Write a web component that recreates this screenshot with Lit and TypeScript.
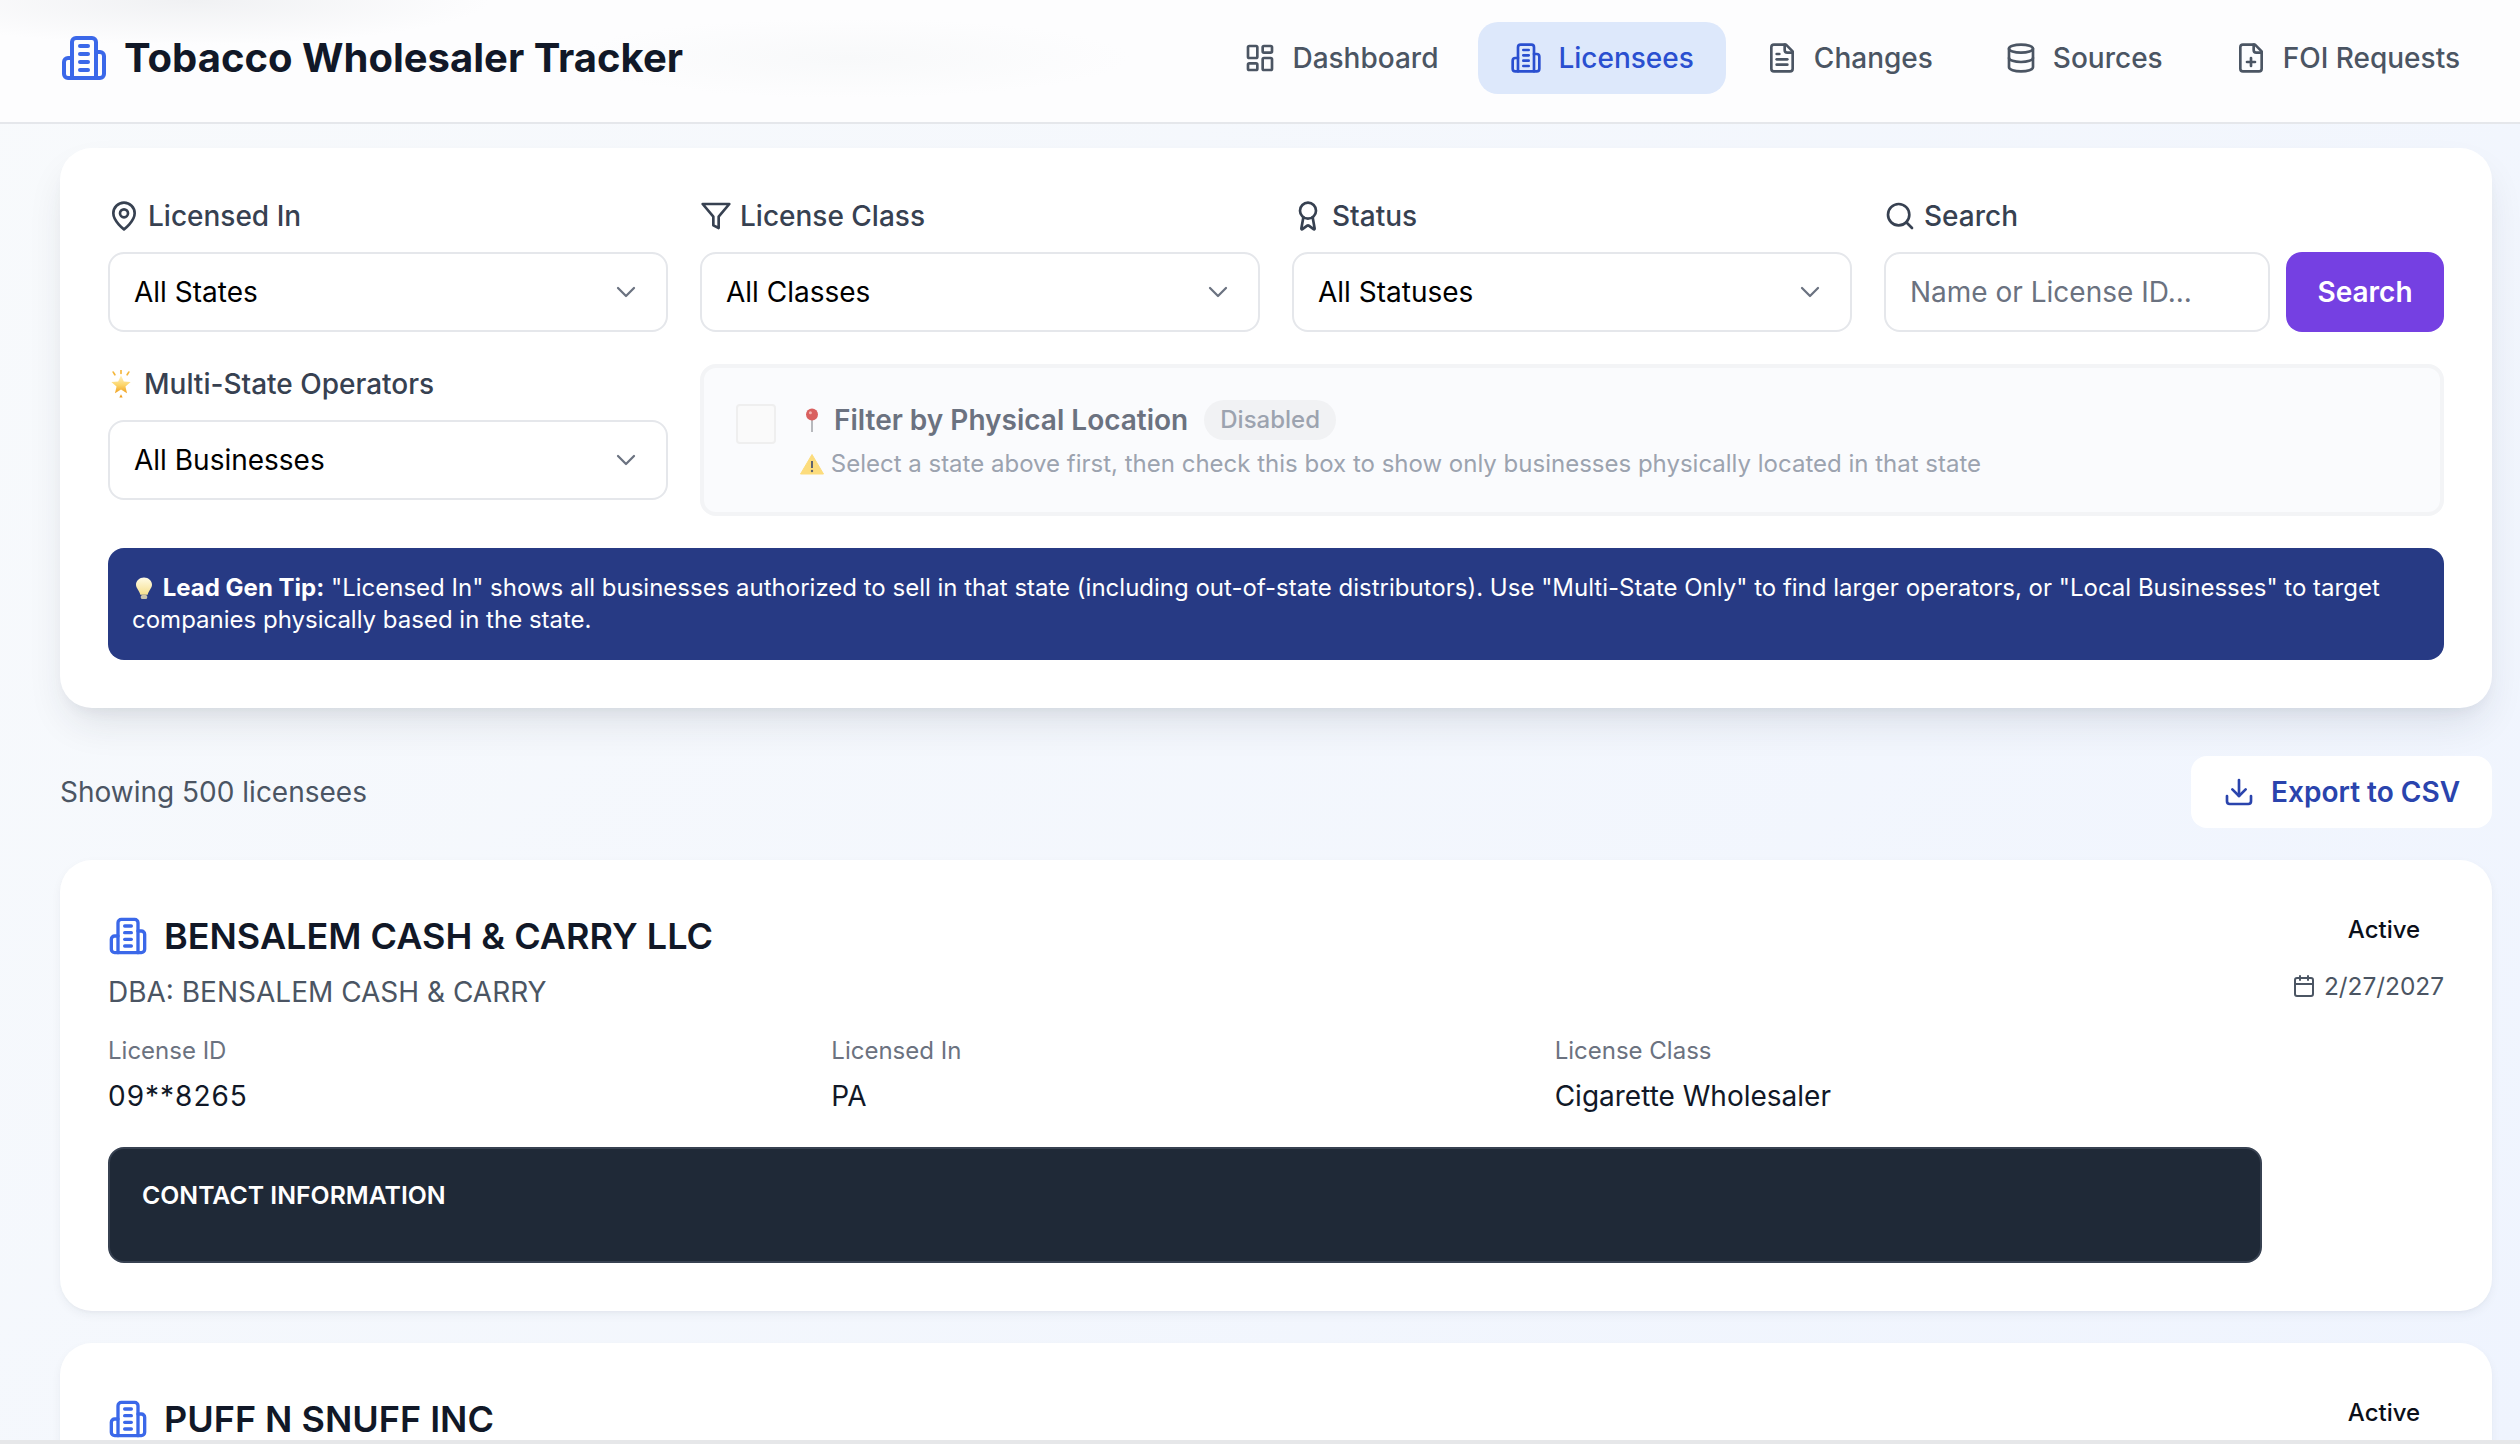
import { LitElement, html, css, svg } from "lit";
import { customElement } from "lit/decorators.js";

const I = (c: any, cls = "") => html`<svg class="ic ${cls}" viewBox="0 0 24 24" fill="none" stroke="currentColor" stroke-width="2" stroke-linecap="round" stroke-linejoin="round">${c}</svg>`;
const building = svg`<path d="M6 22V4a2 2 0 0 1 2-2h8a2 2 0 0 1 2 2v18Z"/><path d="M6 12H4a2 2 0 0 0-2 2v6a2 2 0 0 0 2 2h2"/><path d="M18 9h2a2 2 0 0 1 2 2v9a2 2 0 0 1-2 2h-2"/><path d="M10 6h4"/><path d="M10 10h4"/><path d="M10 14h4"/><path d="M10 18h4"/>`;
const dash = svg`<rect width="7" height="9" x="3" y="3" rx="1"/><rect width="7" height="5" x="14" y="3" rx="1"/><rect width="7" height="9" x="14" y="12" rx="1"/><rect width="7" height="5" x="3" y="16" rx="1"/>`;
const fileText = svg`<path d="M15 2H6a2 2 0 0 0-2 2v16a2 2 0 0 0 2 2h12a2 2 0 0 0 2-2V7Z"/><path d="M14 2v4a2 2 0 0 0 2 2h4"/><path d="M10 9H8"/><path d="M16 13H8"/><path d="M16 17H8"/>`;
const database = svg`<ellipse cx="12" cy="5" rx="9" ry="3"/><path d="M3 5V19A9 3 0 0 0 21 19V5"/><path d="M3 12A9 3 0 0 0 21 12"/>`;
const filePlus = svg`<path d="M15 2H6a2 2 0 0 0-2 2v16a2 2 0 0 0 2 2h12a2 2 0 0 0 2-2V7Z"/><path d="M14 2v4a2 2 0 0 0 2 2h4"/><path d="M9 15h6"/><path d="M12 18v-6"/>`;
const pin = svg`<path d="M20 10c0 6-8 12-8 12s-8-6-8-12a8 8 0 0 1 16 0Z"/><circle cx="12" cy="10" r="3"/>`;
const filter = svg`<polygon points="22 3 2 3 10 12.46 10 19 14 21 14 12.46 22 3"/>`;
const award = svg`<path d="m15.477 12.89 1.515 8.526a.5.5 0 0 1-.81.47l-3.58-2.687a1 1 0 0 0-1.197 0l-3.586 2.686a.5.5 0 0 1-.81-.469l1.514-8.526"/><circle cx="12" cy="8" r="6"/>`;
const search = svg`<circle cx="11" cy="11" r="8"/><path d="m21 21-4.3-4.3"/>`;
const download = svg`<path d="M21 15v4a2 2 0 0 1-2 2H5a2 2 0 0 1-2-2v-4"/><path d="M7 10l5 5 5-5"/><path d="M12 15V3"/>`;
const calendar = svg`<path d="M8 2v4"/><path d="M16 2v4"/><rect width="18" height="18" x="3" y="4" rx="2"/><path d="M3 10h18"/>`;
const chevron = svg`<path d="m6 9 6 6 6-6"/>`;

const starIcon = html`<svg class="em star" viewBox="3 0.5 22 27"><defs><linearGradient id="sg" x1="0" y1="0" x2="0" y2="1"><stop offset="0" stop-color="#fff3c4"/><stop offset=".55" stop-color="#fcd56a"/><stop offset="1" stop-color="#f0a020"/></linearGradient></defs><path d="M14 5.500l2.700 6 6.600.6-5 4.300 1.500 6.400-5.800-3.400-5.800 3.400 1.500-6.400-5-4.300 6.600-.6z" fill="url(#sg)"/><path d="M14 .8v3M6.500 2.500l1.600 2.600M21.500 2.500l-1.600 2.600" stroke="#f4b63a" stroke-width="1.600" stroke-linecap="round"/><path d="M14 24l1.600 3h-3.200z" fill="#f0a020"/></svg>`;
const pinIcon = html`<svg class="em pin" viewBox="0 0 24 24"><rect x="11.200" y="9" width="1.600" height="15" fill="#a7a9ad"/><circle cx="12" cy="6.500" r="6" fill="#d9605f"/><circle cx="10.400" cy="4.800" r="1.500" fill="#f2b3b0"/></svg>`;
const warnIcon = html`<svg class="em warn" viewBox="0 0 24 24"><path d="M12 2.500L23.500 22H.5z" fill="#fcdc7c" stroke="#fcdc7c" stroke-linejoin="round"/><path d="M12 9v7" stroke="#5f6470" stroke-width="2"/><circle cx="12" cy="19" r="1.200" fill="#5f6470"/></svg>`;
const bulbIcon = html`<svg class="em bulb" viewBox="0 0 24 24"><defs><linearGradient id="bg" x1="0" y1="0" x2="0" y2="1"><stop offset="0" stop-color="#fffbe6"/><stop offset="1" stop-color="#f6e08e"/></linearGradient></defs><path d="M12 1.500c4.600 0 8 3.300 8 7.200 0 3.400-3.500 5.800-4.300 10H8.300C7.500 14.500 4 12.100 4 8.700c0-3.900 3.400-7.200 8-7.200z" fill="url(#bg)"/><rect x="8.800" y="19" width="6.400" height="4" rx="1.500" fill="#c9c3ac"/></svg>`;

const nav = [
  { t: "Dashboard", i: dash },
  { t: "Licensees", i: building, on: true },
  { t: "Changes", i: fileText },
  { t: "Sources", i: database },
  { t: "FOI Requests", i: filePlus },
];

@customElement("app-root")
export class AppRoot extends LitElement {
  static styles = css`
    :host { display: flex; flex-direction: column; height: 1444px; overflow: hidden; font-family: Inter, "Liberation Sans", sans-serif; color: #111827; background: linear-gradient(135deg, #f8fafc 0%, #eff4fe 100%); }
    * { box-sizing: border-box; }
    .ic { display: block; flex: none; }
    .em { flex: none; display: inline-block; }
    header { flex: none; height: 124px; border-bottom: 2px solid #e5e7eb; display: flex; align-items: center; justify-content: space-between; padding: 0 28px 6px 60px;
      background: radial-gradient(ellipse 300px 45px at 190px 0, #f0f1f3 0%, rgba(241,242,244,0) 100%), radial-gradient(ellipse 280px 40px at 850px 58px, #f8f9fa 0%, rgba(249,250,251,0) 100%), #fdfdfe; }
    .brand { display: flex; align-items: center; gap: 16px; }
    .brand .ic { width: 48px; height: 48px; color: #3b68e9; }
    .brand h1 { margin: 0; font-size: 40px; line-height: 56px; font-weight: 700; color: #111827; }
    nav { display: flex; align-items: center; gap: 8px; }
    .nav { display: flex; align-items: center; gap: 16px; height: 72px; padding: 0 32px; border-radius: 20px; font-size: 28px; font-weight: 500; color: #4b5563; }
    .nav .ic { width: 32px; height: 32px; }
    .nav.on { background: #dde8fb; color: #2a4fd0; }
    main { flex: 1; min-height: 0; overflow: hidden; padding: 24px 28px 0 60px; display: flex; flex-direction: column; }
    .panel { flex: none; background: #fff; border-radius: 32px; padding: 48px; box-shadow: 0 20px 40px -8px rgba(30,41,59,.12), 0 8px 16px -8px rgba(30,41,59,.08); display: flex; flex-direction: column; gap: 32px; }
    .grid { display: grid; grid-template-columns: repeat(4, 1fr); gap: 32px; }
    .field { display: flex; flex-direction: column; gap: 16px; }
    .label { display: flex; align-items: center; gap: 8px; height: 40px; font-size: 28px; font-weight: 500; color: #374151; }
    .label .ic { width: 32px; height: 32px; }
    .label .star { width: 26px; height: 28px; margin-right: 2px; }
    select, input { height: 80px; width: 100%; min-width: 0; border: 2px solid #e5e7eb; border-radius: 16px; background-color: #fff; font: 400 28px Inter, "Liberation Sans", sans-serif; color: #000; padding: 0 24px; outline: none; }
    .sel { position: relative; }
    select { appearance: none; display: block; }
    .sel .ic { position: absolute; right: 26px; top: 24px; width: 32px; height: 32px; color: #6b7280; pointer-events: none; stroke-width: 1.7; }
    input::placeholder { color: #6b7280; opacity: 1; }
    .search { display: flex; gap: 16px; }
    .search input { flex: 1; }
    button { font-family: inherit; border: 0; cursor: pointer; }
    .go { flex: none; width: 158px; height: 80px; border-radius: 16px; background: #7540e2; color: #fff; font-size: 28px; font-weight: 600; }
    .phys { grid-column: 2 / 5; height: 152px; border: 4px solid #f3f4f6; border-radius: 16px; background: #fafbfd; display: flex; align-items: flex-start; padding: 36px 32px; gap: 24px; }
    .box { flex: none; width: 40px; height: 40px; border: 2px solid #efefef; border-radius: 4px; background: #fafafa; }
    .phys-body { display: flex; flex-direction: column; gap: 4px; margin-top: -6px; }
    .ptitle { display: flex; align-items: center; gap: 16px; font-size: 28px; font-weight: 600; color: #6b7280; line-height: 44px; }
    .ptitle .pin { width: 24px; height: 26px; margin-right: -6px; }
    .pill { font-size: 24px; font-weight: 500; color: #9ca3af; background: #f1f2f4; border-radius: 20px; padding: 0 16px; height: 40px; line-height: 40px; }
    .psub { font-size: 24px; color: #9ca3af; line-height: 36px; }
    .psub .warn { width: 24px; height: 24px; vertical-align: -4px; }
    .tip { background: #273a84; color: #fff; border-radius: 16px; padding: 24px; font-size: 24px; line-height: 32px; }
    .tip b { font-weight: 700; }
    .tip .bulb { width: 24px; height: 24px; vertical-align: -4px; }
    .bar { flex: none; display: flex; justify-content: space-between; align-items: center; margin-top: 48px; height: 72px; }
    .count { font-size: 28px; color: #4b5563; }
    .export { display: flex; align-items: center; gap: 16px; height: 72px; padding: 0 32px; border-radius: 16px; background: #fff; color: #2a44ad; font-size: 28px; font-weight: 600; }
    .export .ic { width: 32px; height: 32px; }
    .list { display: flex; flex-direction: column; gap: 32px; margin-top: 32px; }
    .card { flex: none; background: #fff; border-radius: 32px; padding: 48px; display: flex; gap: 32px; box-shadow: 0 4px 12px -2px rgba(30,41,59,.07), 0 2px 4px -2px rgba(30,41,59,.05); }
    .left { flex: 1; min-width: 0; }
    .name { display: flex; align-items: center; gap: 16px; margin: 0; font-size: 36px; line-height: 56px; font-weight: 600; color: #111827; }
    .name .ic { width: 40px; height: 40px; color: #3b68e9; }
    .dba { font-size: 28px; line-height: 40px; color: #4b5563; margin-top: 8px; }
    .cols { display: grid; grid-template-columns: repeat(3, 1fr); gap: 16px; margin-top: 21px; }
    .k { font-size: 24px; line-height: 36px; color: #6b7280; font-weight: 400; }
    .v { font-size: 28px; line-height: 44px; color: #111827; margin-top: 5px; }
    .v.id { letter-spacing: 1px; }
    .contact { margin-top: 29px; height: 116px; background: #1f2937; border: 2px solid #374151; border-radius: 16px; padding: 30px 32px; color: #fff; font-size: 24.8px; line-height: 32px; font-weight: 600; }
    .right { flex: none; width: 150px; display: flex; flex-direction: column; align-items: flex-end; padding-top: 4px; }
    .status { width: 120px; text-align: center; font-size: 24px; font-weight: 500; color: #0b0f19; line-height: 36px; }
    .date { display: flex; align-items: center; gap: 8px; font-size: 24.4px; color: #4b5563; white-space: nowrap; margin-top: 20px; line-height: 36px; }
    .date .ic { width: 24px; height: 24px; }
    .foot { flex: none; height: 4px; background: #e6e7e9; }
  `;

  render() {
    return html`
      <header>
        <div class="brand">${I(building)}<h1>Tobacco Wholesaler Tracker</h1></div>
        <nav>${nav.map(n => html`<div class="nav ${n.on ? "on" : ""}">${I(n.i)}<span>${n.t}</span></div>`)}</nav>
      </header>
      <main>
        <section class="panel">
          <div class="grid">
            <div class="field">
              <div class="label">${I(pin)}Licensed In</div>
              <div class="sel"><select><option>All States</option></select>${I(chevron)}</div>
            </div>
            <div class="field">
              <div class="label">${I(filter)}License Class</div>
              <div class="sel"><select><option>All Classes</option></select>${I(chevron)}</div>
            </div>
            <div class="field">
              <div class="label">${I(award)}Status</div>
              <div class="sel"><select><option>All Statuses</option></select>${I(chevron)}</div>
            </div>
            <div class="field">
              <div class="label">${I(search)}Search</div>
              <div class="search"><input placeholder="Name or License ID..." /><button class="go">Search</button></div>
            </div>
            <div class="field">
              <div class="label">${starIcon}Multi-State Operators</div>
              <div class="sel"><select><option>All Businesses</option></select>${I(chevron)}</div>
            </div>
            <div class="phys">
              <div class="box"></div>
              <div class="phys-body">
                <div class="ptitle">${pinIcon}<span>Filter by Physical Location</span><span class="pill">Disabled</span></div>
                <div class="psub">${warnIcon} Select a state above first, then check this box to show only businesses physically located in that state</div>
              </div>
            </div>
          </div>
          <div class="tip">${bulbIcon} <b>Lead Gen Tip:</b> "Licensed In" shows all businesses authorized to sell in that state (including out-of-state distributors). Use "Multi-State Only" to find larger operators, or "Local Businesses" to target companies physically based in the state.</div>
        </section>
        <div class="bar">
          <div class="count">Showing 500 licensees</div>
          <div class="export">${I(download)}Export to CSV</div>
        </div>
        <div class="list">
          <article class="card">
            <div class="left">
              <h2 class="name">${I(building)}BENSALEM CASH &amp; CARRY LLC</h2>
              <div class="dba">DBA: BENSALEM CASH &amp; CARRY</div>
              <div class="cols">
                <div><div class="k">License ID</div><div class="v id">09**8265</div></div>
                <div><div class="k">Licensed In</div><div class="v">PA</div></div>
                <div><div class="k">License Class</div><div class="v">Cigarette Wholesaler</div></div>
              </div>
              <div class="contact">CONTACT INFORMATION</div>
            </div>
            <div class="right">
              <div class="status">Active</div>
              <div class="date">${I(calendar)}2/27/2027</div>
            </div>
          </article>
          <article class="card">
            <div class="left"><h2 class="name">${I(building)}PUFF N SNUFF INC</h2></div>
            <div class="right"><div class="status">Active</div></div>
          </article>
        </div>
      </main>
      <div class="foot"></div>
    `;
  }
}
